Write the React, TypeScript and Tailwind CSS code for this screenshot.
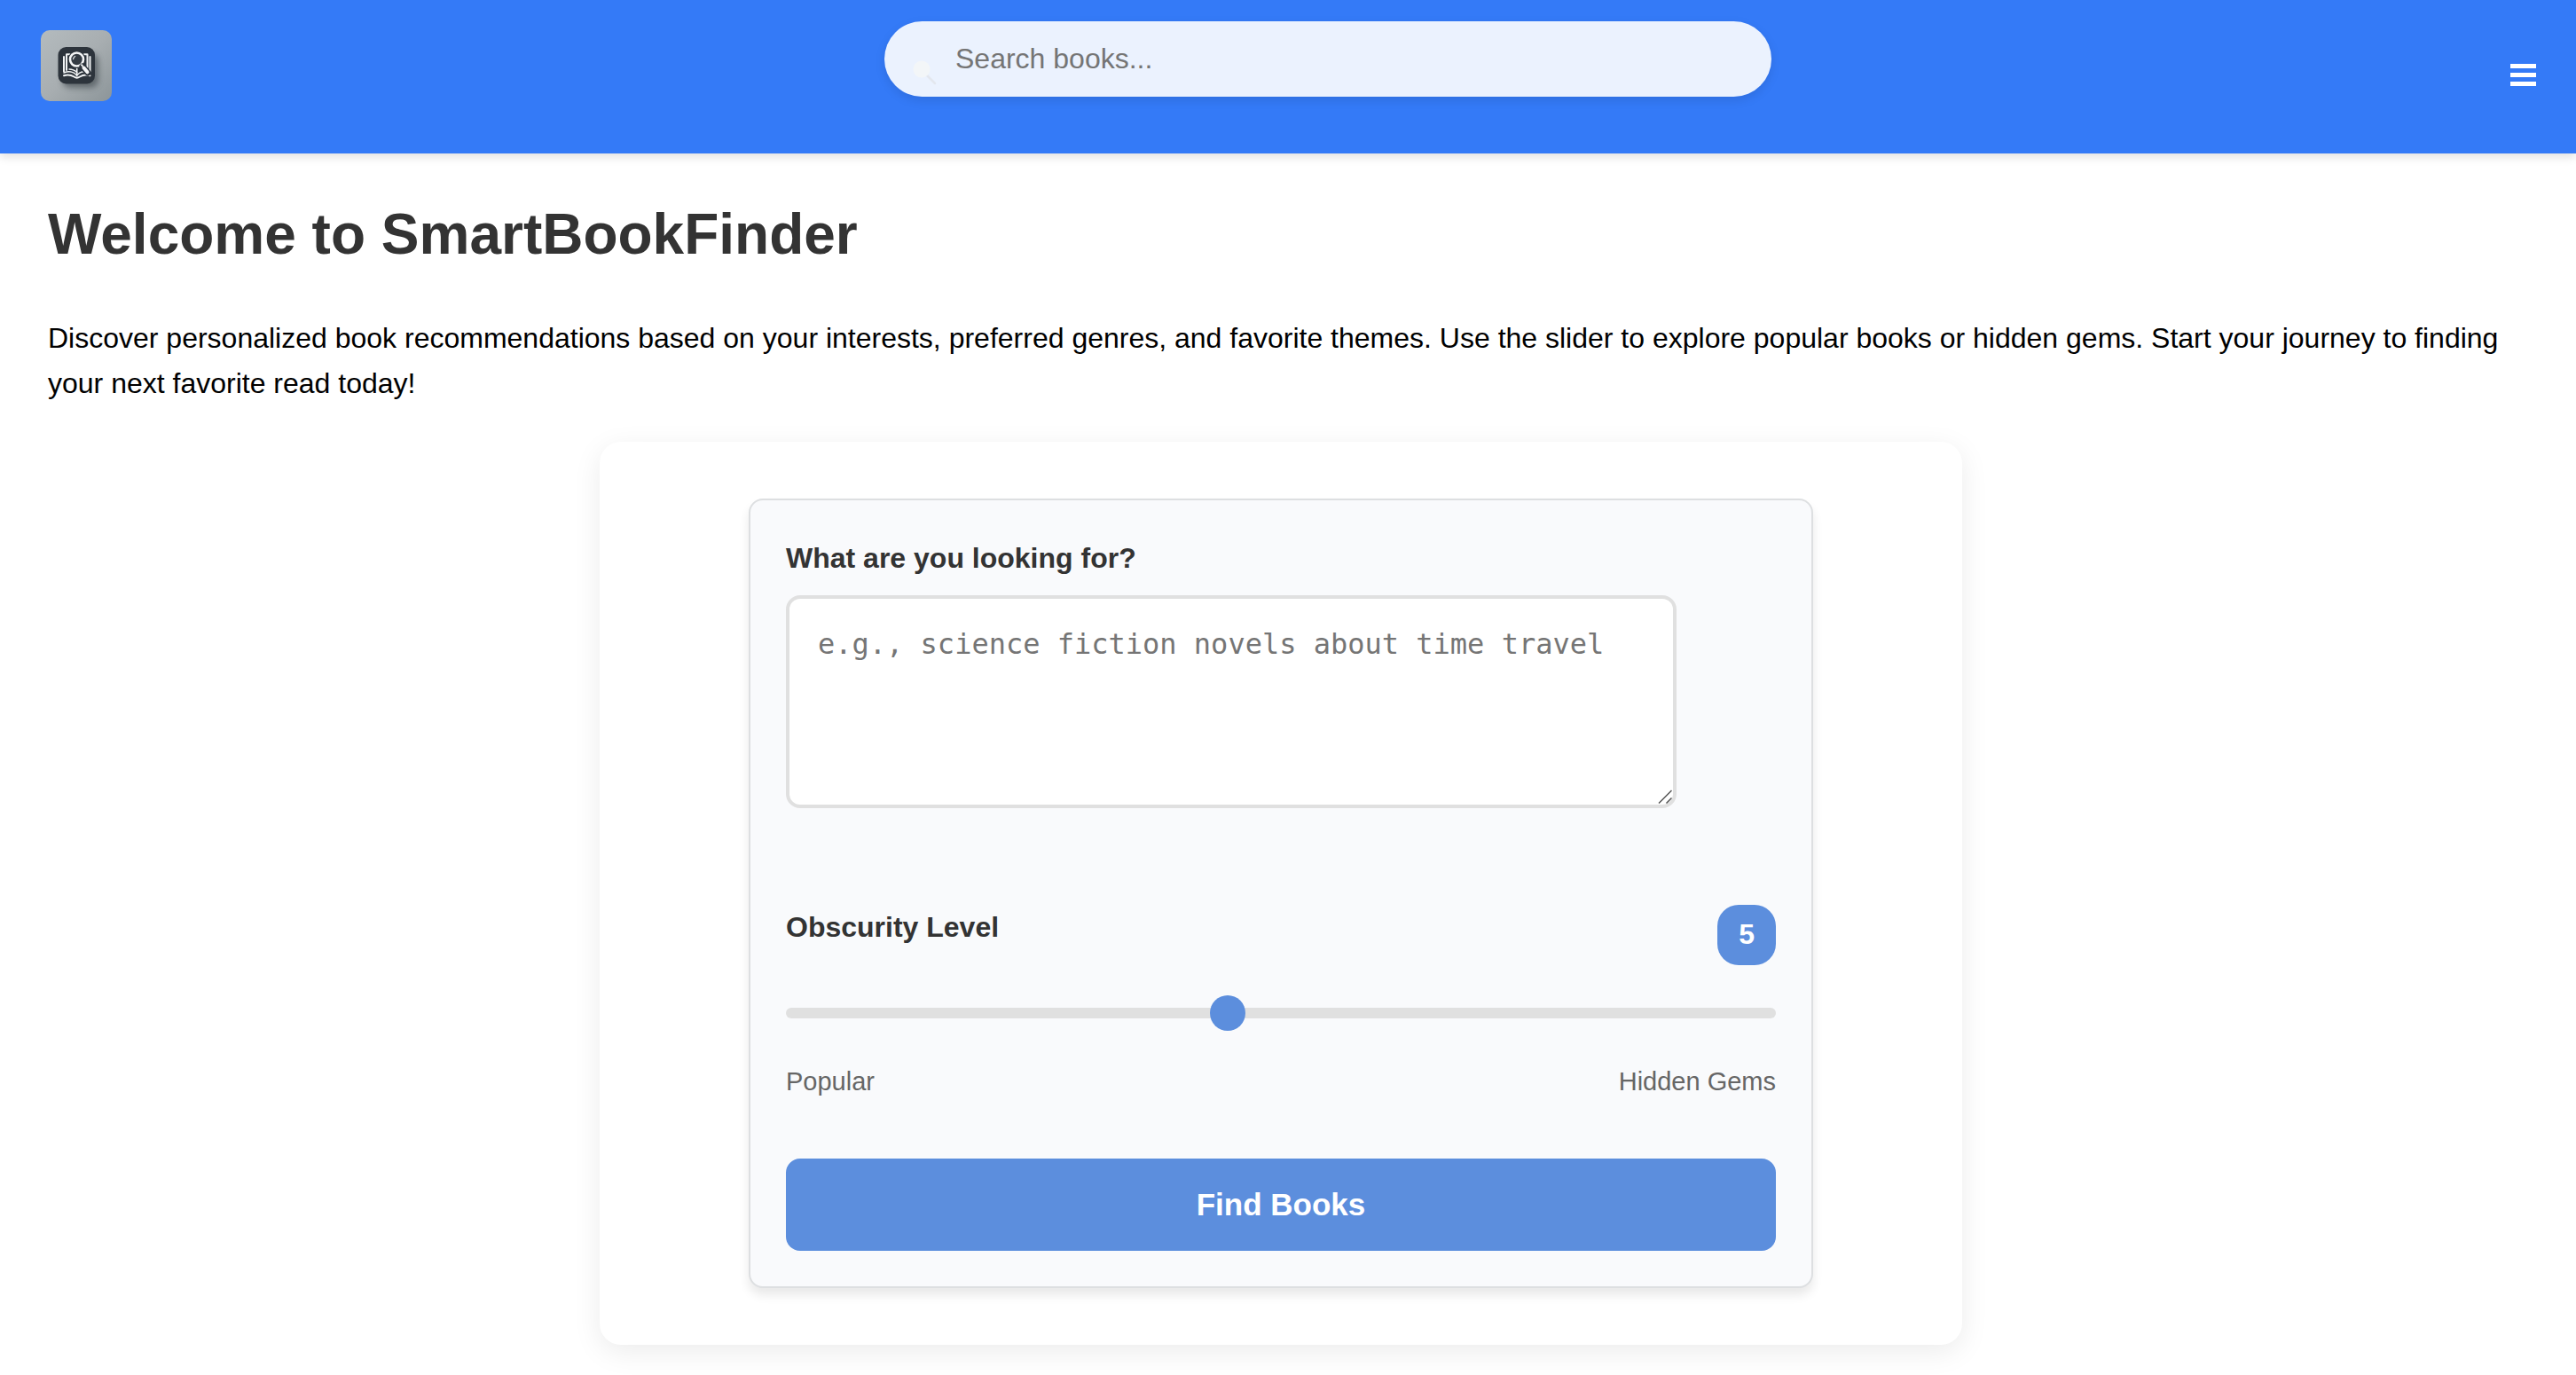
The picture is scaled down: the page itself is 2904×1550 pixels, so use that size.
import { useState } from "react";

function Logo() {
  return (
    <svg viewBox="0 0 80 80" className="size-20 rounded-[10px]" role="img" aria-label="SmartBookFinder logo">
      <defs>
        <linearGradient id="plate" x1="0" y1="0" x2="1" y2="1">
          <stop offset="0" stopColor="#b4bbbe" />
          <stop offset="0.5" stopColor="#a8aeb1" />
          <stop offset="1" stopColor="#8c9599" />
        </linearGradient>
        <filter id="soft" x="-40%" y="-40%" width="180%" height="180%">
          <feGaussianBlur stdDeviation="3" />
        </filter>
      </defs>
      <rect width="80" height="80" fill="url(#plate)" />
      <rect x="24" y="26" width="41" height="39" rx="9" fill="#4a5157" opacity="0.7" filter="url(#soft)" />
      <rect x="19.500" y="19" width="41.500" height="41.500" rx="9" fill="#2d343c" />
      <g fill="none" stroke="#f1f3f4" strokeLinecap="round" strokeLinejoin="round">
        <path strokeWidth="2" d="M26 30v16.500" />
        <path strokeWidth="2" d="M55.500 30v16.500" />
        <path strokeWidth="2" d="M33 27.200h-4V45" />
        <path strokeWidth="2" d="M49 27.200h3.500V42" />
        <path strokeWidth="1.600" d="M26 48c5-2 11-1.500 14.700 3.200C44 46.500 50 46 55.500 48" />
        <path strokeWidth="2" d="M26 51.300c4-1.300 8-.8 11.500 1.200 2 1.400 4.400 1.400 6.400 0 3.500-2 7.500-2.500 11.600-1.200" />
        <path strokeWidth="1.600" d="M40.700 43.500v6.500" />
        <path strokeWidth="1.400" d="M32 44c3 0 6 1 8.700 3.500" />
      </g>
      <circle cx="40.500" cy="33" r="9.800" fill="#2d343c" />
      <circle cx="40.500" cy="33" r="7.500" fill="#343b43" stroke="#f4f5f6" strokeWidth="2.600" />
      <path d="M36.600 32.500a4 4 0 0 1 2-3" fill="none" stroke="#e6e8ea" strokeWidth="1.300" strokeLinecap="round" />
      <path d="M47 41l6 7" stroke="#2d343c" strokeWidth="7" strokeLinecap="round" />
      <path d="M45.500 38.500l2 2.500" stroke="#f4f5f6" strokeWidth="2" />
      <path d="M48.500 42.500l4 4.800" stroke="#f4f5f6" strokeWidth="4" strokeLinecap="round" />
    </svg>
  );
}

function Header() {
  return (
    <header className="relative flex h-[173px] items-start justify-between bg-[#347af7] pr-[45px] pl-[46px] shadow-[0_4px_10px_rgba(0,0,0,0.12)]">
      <a href="#home" className="mt-[34px] pr-[38px]">
        <Logo />
      </a>
      <div className="relative mt-6 w-full max-w-[1000px]">
        <input
          type="search"
          aria-label="Search books"
          placeholder="Search books..."
          className="h-[85px] w-full rounded-full bg-white/90 pr-8 pl-20 text-[32px] text-[#333] shadow-[0_4px_12px_rgba(0,0,0,0.1)] outline-none placeholder:text-[#757575]"
        />
        <svg viewBox="0 0 30 30" className="pointer-events-none absolute top-[42px] left-[30px] size-[30px]" aria-hidden="true">
          <path d="M18 19l9 9" stroke="#e3e7ee" strokeWidth="2.500" strokeLinecap="round" />
          <circle cx="12" cy="12" r="9.500" fill="#f3f6f8" />
        </svg>
      </div>
      <button type="button" aria-label="Open menu" className="mt-[72px] flex w-[29px] flex-col gap-[5px]">
        <span className="h-[5px] w-full bg-white" />
        <span className="h-[5px] w-full bg-white" />
        <span className="h-[5px] w-full bg-white" />
      </button>
    </header>
  );
}

function SearchForm() {
  const [level, setLevel] = useState(5);

  return (
    <form
      onSubmit={(event) => event.preventDefault()}
      className="mx-auto w-full max-w-[1200px] rounded-2xl border-2 border-[#dddfe1] bg-[#f9fafc] p-10 shadow-[0_8px_12px_rgba(0,0,0,0.09)]"
    >
      <label htmlFor="query" className="block text-[32px] leading-[51px] font-bold text-[#333]">
        What are you looking for?
      </label>
      <div className="relative mt-4 w-[90%]">
        <textarea
          id="query"
          placeholder="e.g., science fiction novels about time travel"
          className="block h-60 w-full resize-none rounded-2xl border-4 border-[#e0e0e0] bg-white p-8 font-['DejaVu_Sans_Mono',monospace] text-[32px] leading-[39px] text-[#333] outline-none placeholder:text-[#757575]"
        />
        <svg viewBox="0 0 16 16" className="pointer-events-none absolute right-[5px] bottom-[5px] size-4" aria-hidden="true">
          <path d="M1 15.500L15.500 1M9.500 15.500l6-6" fill="none" stroke="#555" strokeWidth="1.500" />
        </svg>
      </div>

      <div className="mt-[109px] flex items-start justify-between">
        <label htmlFor="level" className="text-[32px] leading-[51px] font-bold text-[#333]">
          Obscurity Level
        </label>
        <output htmlFor="level" className="h-[68px] rounded-3xl bg-[#5c8edd] px-6 py-2 text-[32px] leading-[51px] font-bold text-white">
          {level}
        </output>
      </div>
      <input
        id="level"
        type="range"
        min={1}
        max={10}
        value={level}
        onChange={(event) => setLevel(Number(event.target.value))}
        className="mt-12 block h-3 w-full cursor-pointer appearance-none rounded-md bg-[#e0e0e0] outline-none [&::-webkit-slider-thumb]:size-10 [&::-webkit-slider-thumb]:appearance-none [&::-webkit-slider-thumb]:rounded-full [&::-webkit-slider-thumb]:bg-[#5c8edd]"
      />
      <div className="mt-12 flex justify-between text-[29px] leading-[46px] text-[#666]">
        <span>Popular</span>
        <span>Hidden Gems</span>
      </div>
      <button type="submit" className="mt-16 block h-[104px] w-full rounded-2xl bg-[#5c8edd] text-[35px] font-bold text-white">
        Find Books
      </button>
    </form>
  );
}

export default function App() {
  return (
    <div className="min-h-screen bg-white font-['Liberation_Sans',Arial,sans-serif]">
      <Header />
      <main className="pt-[54px] pr-[70px] pb-[34px] pl-[54px]">
        <h1 className="text-[64px] leading-[74px] font-bold text-[#333]">Welcome to SmartBookFinder</h1>
        <p className="mt-[55px] text-[32px] leading-[51px] text-black">
          Discover personalized book recommendations based on your interests, preferred genres, and favorite themes. Use
          the slider to explore popular books or hidden gems. Start your journey to finding your next favorite read
          today!
        </p>
        <section className="mx-auto mt-10 w-full max-w-[1536px] rounded-3xl bg-white py-16 shadow-[0_8px_32px_rgba(0,0,0,0.08)]">
          <SearchForm />
        </section>
      </main>
    </div>
  );
}
